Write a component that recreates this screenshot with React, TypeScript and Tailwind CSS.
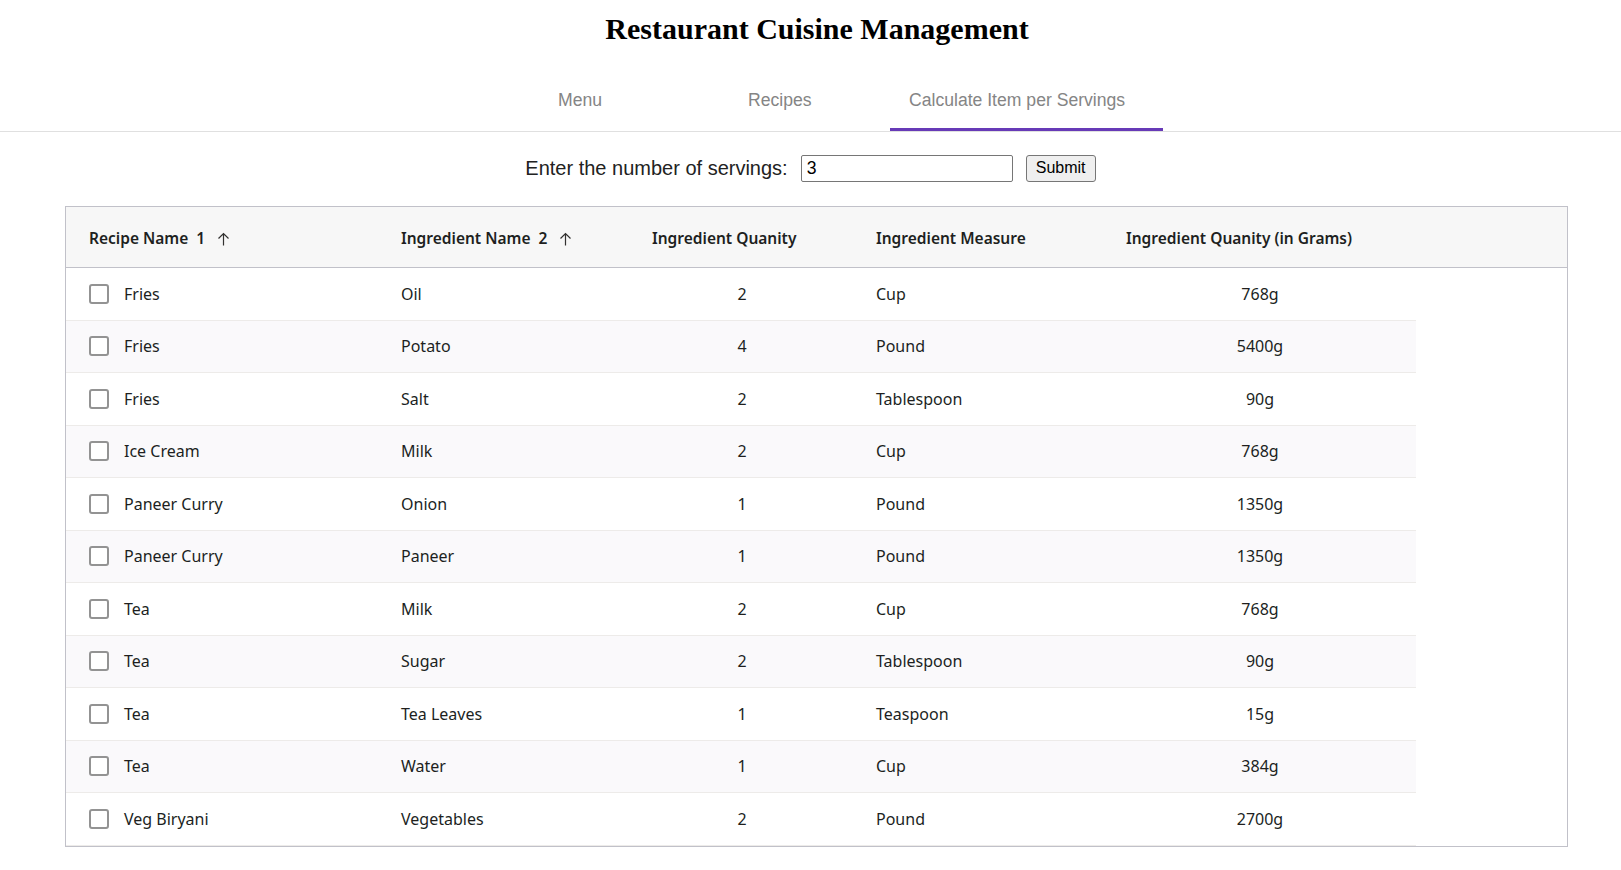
import { useState } from 'react'

type Row = { recipe: string; ingredient: string; qty: number; measure: string; grams: string }

const rows: Row[] = [
  { recipe: 'Fries', ingredient: 'Oil', qty: 2, measure: 'Cup', grams: '768g' },
  { recipe: 'Fries', ingredient: 'Potato', qty: 4, measure: 'Pound', grams: '5400g' },
  { recipe: 'Fries', ingredient: 'Salt', qty: 2, measure: 'Tablespoon', grams: '90g' },
  { recipe: 'Ice Cream', ingredient: 'Milk', qty: 2, measure: 'Cup', grams: '768g' },
  { recipe: 'Paneer Curry', ingredient: 'Onion', qty: 1, measure: 'Pound', grams: '1350g' },
  { recipe: 'Paneer Curry', ingredient: 'Paneer', qty: 1, measure: 'Pound', grams: '1350g' },
  { recipe: 'Tea', ingredient: 'Milk', qty: 2, measure: 'Cup', grams: '768g' },
  { recipe: 'Tea', ingredient: 'Sugar', qty: 2, measure: 'Tablespoon', grams: '90g' },
  { recipe: 'Tea', ingredient: 'Tea Leaves', qty: 1, measure: 'Teaspoon', grams: '15g' },
  { recipe: 'Tea', ingredient: 'Water', qty: 1, measure: 'Cup', grams: '384g' },
  { recipe: 'Veg Biryani', ingredient: 'Vegetables', qty: 2, measure: 'Pound', grams: '2700g' },
]

function SortUp() {
  return (
    <svg width="13" height="14" viewBox="0 0 13 14" fill="none" stroke="#323130" strokeWidth="1.2" className="ml-3">
      <path d="M6.5 1.5V13.5M1.5 6.5L6.5 1.5L11.5 6.5" />
    </svg>
  )
}

function Checkbox() {
  return <span className="box-border block h-[20px] w-[20px] rounded-[3px] border-2 border-[#939393] bg-white" />
}

export default function App() {
  const [servings, setServings] = useState('3')
  const tab = 2

  return (
    <div className="min-h-[870px] bg-white text-black">
      <h1 className="pt-[12px] pl-[13px] text-center font-['Liberation_Serif',serif] text-[30px] font-bold leading-[34px]">
        Restaurant Cuisine Management
      </h1>

      <div className="mt-[44px] flex border-b border-[#e0e0e0] pl-[539px] font-['Liberation_Sans',Arial,sans-serif] text-[17.6px] leading-[20px] text-[#858585]">
        {['Menu', 'Recipes', 'Calculate Item per Servings'].map((t, i) => (
          <button
            key={t}
            type="button"
            className={`box-border border-b-[3px] pb-[18px] pl-[19px] text-left ${
              i === tab ? 'border-[#673ab7]' : 'border-transparent'
            } ${i === 0 ? 'w-[190px]' : i === 1 ? 'w-[161px]' : 'w-[273px]'}`}
          >
            {t}
          </button>
        ))}
      </div>

      <div className="mt-[21px] flex items-center justify-center gap-[13px] font-['Liberation_Sans',Arial,sans-serif]">
        <span className="text-[20px] text-[#222]">Enter the number of servings:</span>
        <input
          value={servings}
          onChange={(e) => setServings(e.target.value)}
          className="box-border h-[27px] w-[212px] rounded-[2px] border border-[#767676] px-[5px] text-[17.6px] outline-none"
        />
        <button
          type="button"
          className="box-border h-[27px] w-[70px] rounded-[3px] border border-[#767676] bg-[#efefef] text-[16px] text-black"
        >
          Submit
        </button>
      </div>

      <div className="mt-[23px] ml-[65px] w-[1503px] border border-[#c1c1c9] font-['Noto_Sans',sans-serif] text-[#201f1e]">
        <div className="flex h-[61px] items-center border-b border-[#c1c1c9] bg-[#f7f7f7] pt-[3px] text-[15.5px] font-semibold">
          <div className="flex w-[323px] items-center pl-[23px]">
            <span>Recipe Name</span>
            <span className="ml-2">1</span>
            <SortUp />
          </div>
          <div className="flex w-[251px] items-center pl-3">
            <span>Ingredient Name</span>
            <span className="ml-2">2</span>
            <SortUp />
          </div>
          <div className="w-[224px] pl-3">Ingredient Quanity</div>
          <div className="w-[250px] pl-3">Ingredient Measure</div>
          <div className="pl-3">Ingredient Quanity (in Grams)</div>
        </div>

        {rows.map((r, i) => (
          <div
            key={i}
            className={`box-border flex h-[52.5px] w-[1350px] items-center border-b border-[#edebe9] text-[16px] ${
              i % 2 === 1 ? 'bg-[#faf9fb]' : 'bg-white'
            }`}
          >
            <div className="flex w-[323px] items-center pl-[23px]">
              <Checkbox />
              <span className="ml-[15px]">{r.recipe}</span>
            </div>
            <div className="w-[251px] pl-3">{r.ingredient}</div>
            <div className="w-[224px] pl-3 pr-[32px] text-center">{r.qty}</div>
            <div className="w-[250px] pl-3">{r.measure}</div>
            <div className="w-[302px] pl-3 pr-[22px] text-center">{r.grams}</div>
          </div>
        ))}
      </div>
    </div>
  )
}
